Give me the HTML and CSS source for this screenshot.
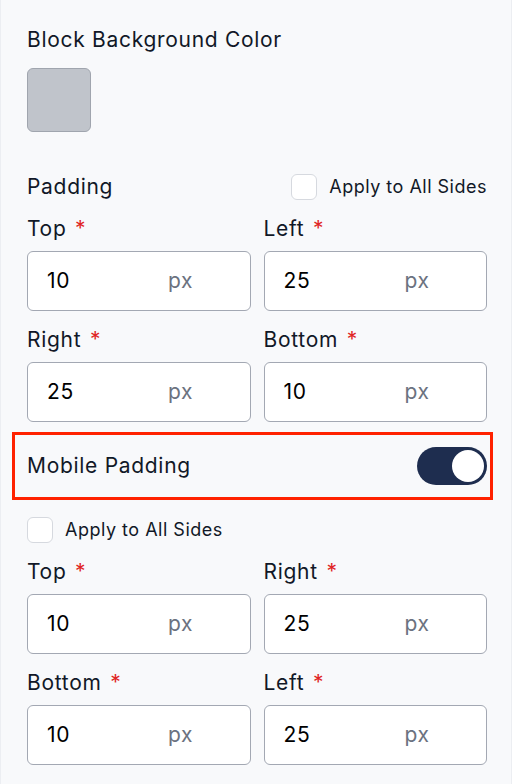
FILE: index.html
```html
<!DOCTYPE html>
<html lang="en">
<head>
    <meta charset="UTF-8">
    <meta name="viewport" content="width=device-width, initial-scale=1.0">
    <title>Block Settings</title>
    <link rel="stylesheet" href="styles.css">
</head>
<body>
    <div class="panel">
        <div class="field-title">Block Background Color</div>
        <div class="swatch"></div>

        <div class="section-head">
            <span>Padding</span>
            <label class="check">
                <span class="box"></span>
                Apply to All Sides
            </label>
        </div>

        <div class="grid">
            <div class="field">
                <div class="label">Top <span class="req">*</span></div>
                <div class="input"><span class="value">10</span><span class="unit">px</span></div>
            </div>
            <div class="field">
                <div class="label">Left <span class="req">*</span></div>
                <div class="input"><span class="value">25</span><span class="unit">px</span></div>
            </div>
            <div class="field">
                <div class="label">Right <span class="req">*</span></div>
                <div class="input"><span class="value">25</span><span class="unit">px</span></div>
            </div>
            <div class="field">
                <div class="label">Bottom <span class="req">*</span></div>
                <div class="input"><span class="value">10</span><span class="unit">px</span></div>
            </div>
        </div>

        <div class="toggle-row">
            <span>Mobile Padding</span>
            <span class="switch on"><span class="knob"></span></span>
        </div>

        <label class="check solo">
            <span class="box"></span>
            Apply to All Sides
        </label>

        <div class="grid">
            <div class="field">
                <div class="label">Top <span class="req">*</span></div>
                <div class="input"><span class="value">10</span><span class="unit">px</span></div>
            </div>
            <div class="field">
                <div class="label">Right <span class="req">*</span></div>
                <div class="input"><span class="value">25</span><span class="unit">px</span></div>
            </div>
            <div class="field">
                <div class="label">Bottom <span class="req">*</span></div>
                <div class="input"><span class="value">10</span><span class="unit">px</span></div>
            </div>
            <div class="field">
                <div class="label">Left <span class="req">*</span></div>
                <div class="input"><span class="value">25</span><span class="unit">px</span></div>
            </div>
        </div>
    </div>
</body>
</html>
```

FILE: styles.css
```css
:root {
    --bg: #f8f9fb;
    --text: #111827;
    --muted: #6b7280;
    --border: #a3a8b3;
    --soft-border: #d6d9df;
    --navy: #1e2d4f;
    --red: #e02424;
}

body {
    margin: 0;
    background-color: var(--bg);
    font-family: Inter, "Noto Sans", sans-serif;
    color: var(--text);
    font-size: 21px;
    line-height: 28px;
    letter-spacing: 0.7px;
}

.panel {
    min-height: 784px;
    box-sizing: border-box;
    padding: 26px 24px 0 26px;
    border-left: 1px solid #eceef2;
    border-right: 1px solid #eceef2;
}

.swatch {
    width: 62px;
    height: 62px;
    margin-top: 14px;
    background-color: #c0c4cb;
    border: 1px solid #a0a5ae;
    border-radius: 6px;
}

.section-head {
    display: flex;
    justify-content: space-between;
    align-items: center;
    margin-top: 41px;
}

.check {
    display: flex;
    align-items: center;
    gap: 12px;
    font-size: 18px;
    letter-spacing: 0.5px;
}

.box {
    width: 24px;
    height: 24px;
    background: #fff;
    border: 1px solid var(--soft-border);
    border-radius: 6px;
}

.grid {
    display: grid;
    grid-template-columns: 1fr 1fr;
    column-gap: 13px;
    row-gap: 15px;
    margin-top: 14px;
}

.label {
    margin-bottom: 8px;
}

.req {
    color: var(--red);
    margin-left: 2px;
}

.input {
    display: flex;
    align-items: center;
    height: 58px;
    padding-left: 19px;
    background: #fff;
    border: 1px solid var(--border);
    border-radius: 6px;
}

.value {
    width: 121px;
    color: #000;
}

.unit {
    color: var(--muted);
}

.toggle-row {
    display: flex;
    justify-content: space-between;
    align-items: center;
    height: 62px;
    margin: 10px -6px 0 -15px;
    padding: 0 3px 0 12px;
    border: 3px solid #ff2200;
}

.switch {
    display: flex;
    align-items: center;
    width: 70px;
    height: 38px;
    padding: 0 3px;
    box-sizing: border-box;
    border-radius: 19px;
    background: var(--navy);
}

.switch.on {
    justify-content: flex-end;
}

.knob {
    width: 32px;
    height: 32px;
    border-radius: 50%;
    background: #fff;
}

.check.solo {
    margin-top: 16px;
}
```
